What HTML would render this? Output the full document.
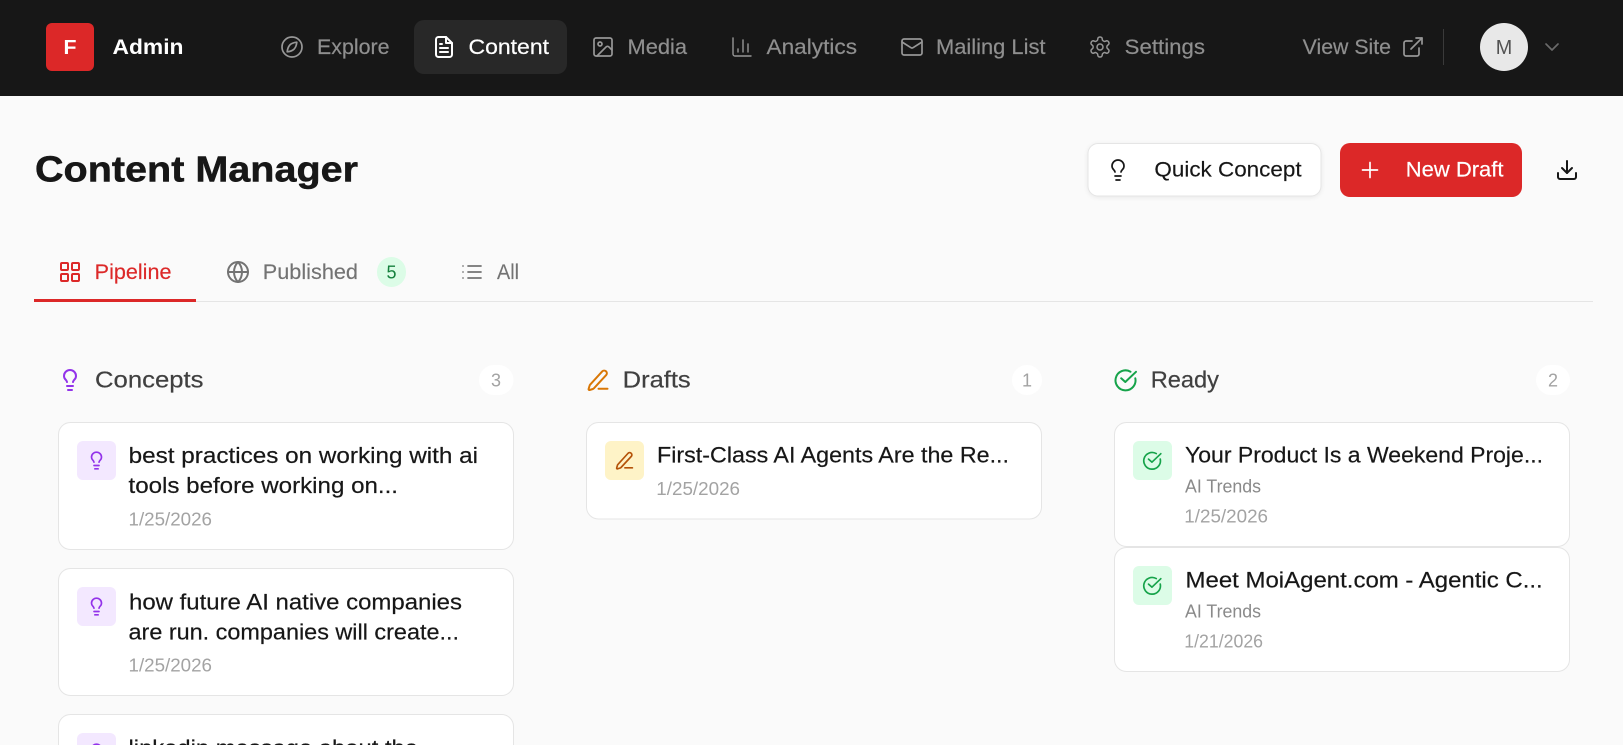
<!DOCTYPE html>
<html lang="en">
<head>
<meta charset="utf-8">
<title>Content Manager</title>
<style>
html,body{margin:0;padding:0;width:1623px;height:745px;overflow:hidden;background:#fafafa}
svg{display:block}
text{font-family:"Liberation Sans",sans-serif;white-space:pre;stroke-linejoin:round}
.i{fill:none;stroke-linecap:round;stroke-linejoin:round;stroke-width:1.7}
.b{stroke-width:2}
.nav{font-size:21px;fill:#8f8f8f;stroke:#8f8f8f;stroke-width:.2}
.title{font-size:22.5px;fill:#171717;stroke:#171717;stroke-width:.2}
.date{font-size:18px;fill:#a3a3a3}
.tag{font-size:18px;fill:#8a8a8a}
.col{font-size:23.5px;fill:#404040;stroke:#404040;stroke-width:.2}
.cnt{font-size:18px;fill:#a3a3a3;text-anchor:middle}
.tab{font-size:21.5px;fill:#737373;stroke:#737373;stroke-width:.15}
.card{fill:#fff;stroke:#e5e5e5;stroke-width:1}
</style>
</head>
<body>
<svg xmlns="http://www.w3.org/2000/svg" width="1623" height="745" viewBox="0 0 1623 745">
<defs>
<g id="bulb"><path d="M15 14c.2-1 .7-1.700 1.500-2.500 1-.9 1.500-2.200 1.500-3.500A6 6 0 0 0 6 8c0 1 .2 2.200 1.500 3.500.7.7 1.300 1.500 1.500 2.500"/><path d="M9 18h6"/><path d="M10 22h4"/></g>
<g id="pen"><path d="M12.500 20.800h9"/><path d="M16.300 3.300a2.700 2.700 0 0 1 4 3.600L7.800 20.400a2 2 0 0 1-.9.6l-3.300 1a.8.8 0 0 1-1-1l1-3.400a2 2 0 0 1 .5-.9z"/></g>
<g id="chk"><path d="M21.300 10.300A10 10 0 1 1 16.500 3.700"/><path d="m7.200 10.300 4.100 3.700L22 3.800"/></g>
</defs>

<!-- Top bar -->
<rect x="0" y="0" width="1623" height="96" fill="#171717"/>
<rect x="46" y="23" width="48" height="48" rx="6" fill="#dc2828"/>
<text x="63.500" y="54" font-size="20" font-weight="700" fill="#fff" textLength="13" lengthAdjust="spacingAndGlyphs">F</text>
<text x="112.500" y="54" font-size="21" font-weight="700" fill="#fff" textLength="71" lengthAdjust="spacingAndGlyphs">Admin</text>

<g class="i" stroke="#979797" transform="translate(280,35)"><circle cx="12" cy="12" r="10"/><path d="M16.800 7.200c-.3 3.200-1.300 5.400-2.700 6.900-1.500 1.400-3.700 2.400-6.900 2.700.3-3.200 1.300-5.400 2.700-6.900 1.500-1.400 3.700-2.400 6.900-2.700z"/></g>
<text class="nav" x="317" y="54" textLength="72.500" lengthAdjust="spacingAndGlyphs">Explore</text>

<rect x="414" y="20" width="153" height="54" rx="10" fill="#282828"/>
<g class="i b" stroke="#fff" transform="translate(432,35)"><path d="M14 2H6.500a2.500 2.500 0 0 0-2.500 2.500v15A2.500 2.500 0 0 0 6.500 22h11a2.500 2.500 0 0 0 2.500-2.500V8z"/><path d="M14 2v6h6"/><path d="M16 13H8"/><path d="M16 17H8"/><path d="M10 9H8"/></g>
<text class="nav" style="fill:#fff;stroke:#fff" x="468.500" y="54" textLength="80.500" lengthAdjust="spacingAndGlyphs">Content</text>

<g class="i" stroke="#979797" transform="translate(591,35)"><rect x="3" y="3" width="18" height="18" rx="2"/><circle cx="9" cy="9" r="2"/><path d="m21 15-3.086-3.086a2 2 0 0 0-2.828 0L6 21"/></g>
<text class="nav" x="627.500" y="54" textLength="59.500" lengthAdjust="spacingAndGlyphs">Media</text>

<g class="i" stroke="#979797" style="stroke-width:1.400" transform="translate(730,35)"><path d="M3 3v16a2 2 0 0 0 2 2h16"/><path d="M18 17V9"/><path d="M13 17V5"/><path d="M8 17v-3"/></g>
<text class="nav" x="766.500" y="54" textLength="90.500" lengthAdjust="spacingAndGlyphs">Analytics</text>

<g class="i" stroke="#979797" transform="translate(900,35)"><rect x="2" y="4" width="20" height="16" rx="2"/><path d="m22 7-8.970 5.700a1.940 1.940 0 0 1-2.060 0L2 7"/></g>
<text class="nav" x="936" y="54" textLength="109.500" lengthAdjust="spacingAndGlyphs">Mailing List</text>

<g class="i" stroke="#979797" style="stroke-width:1.500" transform="translate(1088,35)"><path d="M12.220 2h-.44a2 2 0 0 0-2 2v.18a2 2 0 0 1-1 1.730l-.43.25a2 2 0 0 1-2 0l-.15-.08a2 2 0 0 0-2.730.73l-.22.38a2 2 0 0 0 .73 2.730l.15.1a2 2 0 0 1 1 1.720v.51a2 2 0 0 1-1 1.740l-.15.09a2 2 0 0 0-.73 2.730l.22.38a2 2 0 0 0 2.730.73l.15-.08a2 2 0 0 1 2 0l.43.25a2 2 0 0 1 1 1.730V20a2 2 0 0 0 2 2h.44a2 2 0 0 0 2-2v-.18a2 2 0 0 1 1-1.730l.43-.25a2 2 0 0 1 2 0l.15.08a2 2 0 0 0 2.730-.73l.22-.39a2 2 0 0 0-.73-2.730l-.15-.08a2 2 0 0 1-1-1.740v-.5a2 2 0 0 1 1-1.740l.15-.09a2 2 0 0 0 .73-2.730l-.22-.38a2 2 0 0 0-2.730-.73l-.15.08a2 2 0 0 1-2 0l-.43-.25a2 2 0 0 1-1-1.730V4a2 2 0 0 0-2-2z"/><circle cx="12" cy="12" r="3"/></g>
<text class="nav" x="1124.700" y="54" textLength="80.300" lengthAdjust="spacingAndGlyphs">Settings</text>

<text class="nav" x="1302.700" y="54" textLength="88.300" lengthAdjust="spacingAndGlyphs">View Site</text>
<g class="i" stroke="#979797" transform="translate(1401,35)"><path d="M15 3h6v6"/><path d="M10 14 21 3"/><path d="M18 13v6a2 2 0 0 1-2 2H5a2 2 0 0 1-2-2V8a2 2 0 0 1 2-2h6"/></g>
<rect x="1443" y="29" width="1" height="36" fill="#3a3a3a"/>
<circle cx="1504" cy="47" r="24" fill="#e8e8e8"/>
<text x="1495.700" y="54" font-size="20" fill="#525252" textLength="16.500" lengthAdjust="spacingAndGlyphs">M</text>
<g class="i" stroke="#6a6a6a" transform="translate(1540,35)"><path d="m6 9 6 6 6-6"/></g>

<!-- Page header -->
<text x="35" y="181.700" font-size="36" font-weight="700" fill="#171717" stroke="#171717" stroke-width=".5" textLength="323" lengthAdjust="spacingAndGlyphs">Content Manager</text>

<rect x="1088" y="143.500" width="233" height="52.500" rx="10" fill="#fff" stroke="#e5e5e5" style="filter:drop-shadow(0 1px 2px rgba(0,0,0,.07))"/>
<g class="i" stroke="#171717" transform="translate(1106,158)"><use href="#bulb"/></g>
<text x="1154.400" y="176.700" font-size="21.500" fill="#171717" stroke="#171717" stroke-width=".15" textLength="147.200" lengthAdjust="spacingAndGlyphs">Quick Concept</text>

<rect x="1340" y="143" width="182" height="54" rx="10" fill="#dc2828"/>
<g class="i" stroke="#fff" transform="translate(1358,158)"><path d="M4.500 12h15"/><path d="M12 4.500v15"/></g>
<text x="1405.800" y="176.700" font-size="21.500" fill="#fff" stroke="#fff" stroke-width=".2" textLength="97.700" lengthAdjust="spacingAndGlyphs">New Draft</text>

<g class="i b" stroke="#171717" transform="translate(1555,158)"><path d="M21 15v4a2 2 0 0 1-2 2H5a2 2 0 0 1-2-2v-4"/><path d="M7 10l5 5 5-5"/><path d="M12 15V3"/></g>

<!-- Tabs -->
<rect x="34" y="301" width="1559" height="1" fill="#e5e5e5"/>
<rect x="34" y="299" width="162" height="3" fill="#dc2828"/>
<g class="i b" stroke="#dc2828" transform="translate(58,260)"><rect x="3" y="3" width="7" height="7" rx="1"/><rect x="14" y="3" width="7" height="7" rx="1"/><rect x="14" y="14" width="7" height="7" rx="1"/><rect x="3" y="14" width="7" height="7" rx="1"/></g>
<text class="tab" style="fill:#dc2828;stroke:#dc2828" x="94.700" y="279" textLength="76.800" lengthAdjust="spacingAndGlyphs">Pipeline</text>
<g class="i b" stroke="#737373" transform="translate(226,260)"><circle cx="12" cy="12" r="10"/><path d="M12 2a14.500 14.500 0 0 0 0 20 14.500 14.500 0 0 0 0-20"/><path d="M2 12h20"/></g>
<text class="tab" x="262.800" y="279" textLength="95.200" lengthAdjust="spacingAndGlyphs">Published</text>
<rect x="377" y="257" width="29" height="30" rx="14.500" fill="#dcfce7"/>
<text x="391.500" y="278.500" font-size="18" fill="#15803d" text-anchor="middle">5</text>
<g class="i" stroke="#737373" transform="translate(460,260)"><path d="M3 12h.01"/><path d="M3 18h.01"/><path d="M3 6h.01"/><path d="M8 12h13"/><path d="M8 18h13"/><path d="M8 6h13"/></g>
<text class="tab" x="497" y="279" textLength="22" lengthAdjust="spacingAndGlyphs">All</text>

<!-- Column: Concepts -->
<g class="i b" stroke="#9333ea" transform="translate(58,368)"><use href="#bulb"/></g>
<text class="col" x="95" y="387.700" textLength="108.500" lengthAdjust="spacingAndGlyphs">Concepts</text>
<rect x="479" y="365" width="34.500" height="30" rx="15" fill="#fff"/>
<text class="cnt" x="496" y="386.500">3</text>

<rect class="card" x="58.500" y="422.500" width="455" height="127" rx="12"/>
<rect x="77" y="441" width="39" height="39" rx="6" fill="#f3e8ff"/>
<g class="i b" stroke="#9333ea" transform="translate(86.500,450.500) scale(.8333)"><use href="#bulb"/></g>
<text class="title" x="128.700" y="463" textLength="349.300" lengthAdjust="spacingAndGlyphs">best practices on working with ai</text>
<text class="title" x="128.500" y="493" textLength="269.500" lengthAdjust="spacingAndGlyphs">tools before working on...</text>
<text class="date" x="128.500" y="525.700" textLength="83.500" lengthAdjust="spacingAndGlyphs">1/25/2026</text>

<rect class="card" x="58.500" y="568.500" width="455" height="127" rx="12"/>
<rect x="77" y="587" width="39" height="39" rx="6" fill="#f3e8ff"/>
<g class="i b" stroke="#9333ea" transform="translate(86.500,596.500) scale(.8333)"><use href="#bulb"/></g>
<text class="title" x="129" y="609.300" textLength="333" lengthAdjust="spacingAndGlyphs">how future AI native companies</text>
<text class="title" x="128.500" y="639.300" textLength="330.500" lengthAdjust="spacingAndGlyphs">are run. companies will create...</text>
<text class="date" x="128.500" y="671.700" textLength="83.500" lengthAdjust="spacingAndGlyphs">1/25/2026</text>

<!-- Third concept card, cut off by the viewport -->
<path class="card" d="M58.500 745V726.500a12 12 0 0 1 12-12h431a12 12 0 0 1 12 12V745"/>
<path d="M77 745V739a6 6 0 0 1 6-6h27a6 6 0 0 1 6 6V745z" fill="#f3e8ff"/>
<svg x="0" y="700" width="1623" height="45" viewBox="0 700 1623 45" overflow="hidden">
<g class="i b" stroke="#9333ea" transform="translate(86.500,742.500) scale(.8333)"><use href="#bulb"/></g>
<text class="title" x="128.500" y="755.300" textLength="289.500" lengthAdjust="spacingAndGlyphs">linkedin message about the</text>
</svg>

<!-- Column: Drafts -->
<g class="i b" stroke="#d97706" transform="translate(586,368)"><use href="#pen"/></g>
<text class="col" x="622.700" y="387.700" textLength="68" lengthAdjust="spacingAndGlyphs">Drafts</text>
<rect x="1012" y="365" width="30" height="30" rx="15" fill="#fff"/>
<text class="cnt" x="1027" y="386.500">1</text>

<rect class="card" x="586.500" y="422.500" width="455" height="96.500" rx="12"/>
<rect x="605" y="441" width="39" height="39" rx="6" fill="#fef3c7"/>
<g class="i b" stroke="#b45309" transform="translate(614.500,450.500) scale(.8333)"><use href="#pen"/></g>
<text class="title" x="657" y="462.700" textLength="352" lengthAdjust="spacingAndGlyphs">First-Class AI Agents Are the Re...</text>
<text class="date" x="656.300" y="495" textLength="83.700" lengthAdjust="spacingAndGlyphs">1/25/2026</text>

<!-- Column: Ready -->
<g class="i b" stroke="#16a34a" transform="translate(1114,368)"><use href="#chk"/></g>
<text class="col" x="1150.700" y="387.700" textLength="68.300" lengthAdjust="spacingAndGlyphs">Ready</text>
<rect x="1536" y="365" width="34" height="30" rx="15" fill="#fff"/>
<text class="cnt" x="1553" y="386.500">2</text>

<rect class="card" x="1114.500" y="422.500" width="455" height="124" rx="12"/>
<rect x="1133" y="441" width="39" height="39" rx="6" fill="#dcfce7"/>
<g class="i b" stroke="#16a34a" transform="translate(1142.500,450.500) scale(.8333)"><use href="#chk"/></g>
<text class="title" x="1185" y="462.700" textLength="358" lengthAdjust="spacingAndGlyphs">Your Product Is a Weekend Proje...</text>
<text class="tag" x="1185" y="492.300" textLength="76" lengthAdjust="spacingAndGlyphs">AI Trends</text>
<text class="date" x="1184.300" y="522.300" textLength="83.700" lengthAdjust="spacingAndGlyphs">1/25/2026</text>

<rect class="card" x="1114.500" y="547.500" width="455" height="124" rx="12"/>
<rect x="1133" y="566" width="39" height="39" rx="6" fill="#dcfce7"/>
<g class="i b" stroke="#16a34a" transform="translate(1142.500,575.500) scale(.8333)"><use href="#chk"/></g>
<text class="title" x="1185.500" y="587.700" textLength="357.200" lengthAdjust="spacingAndGlyphs">Meet MoiAgent.com - Agentic C...</text>
<text class="tag" x="1185" y="617.300" textLength="76" lengthAdjust="spacingAndGlyphs">AI Trends</text>
<text class="date" x="1184.300" y="647.300" textLength="78.700" lengthAdjust="spacingAndGlyphs">1/21/2026</text>
</svg>
</body>
</html>
